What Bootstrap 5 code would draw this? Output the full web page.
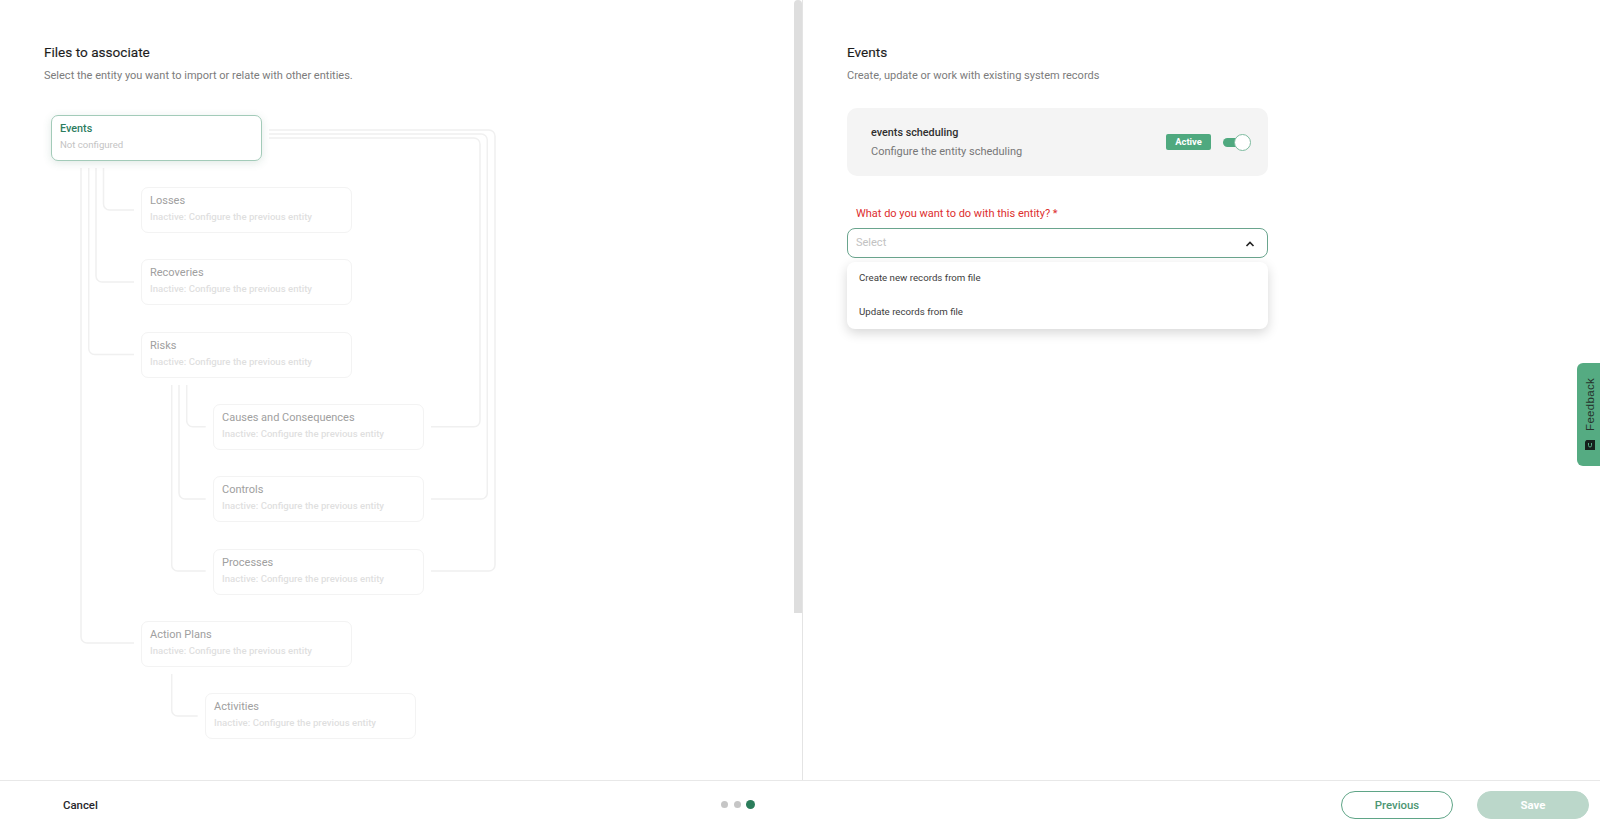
<!DOCTYPE html>
<html lang="en">
<head>
<meta charset="utf-8">
<title>Files to associate</title>
<link href="https://cdn.jsdelivr.net/npm/bootstrap@5.3.0/dist/css/bootstrap.min.css" rel="stylesheet">
<style>
html,body{height:100%;overflow:hidden;background:#fff}
body{font-family:Roboto,"Liberation Sans",sans-serif;color:#212529}
.page-shell{height:823px}
.work-area{height:780px}
.left-pane{width:803px;border-right:1px solid #e4e4e4;position:relative;padding:44px 0 0 44px}
.right-pane{padding:44px 0 0 44px}
.pane-title{font-size:13.6px;font-weight:400;line-height:16px;margin:0 0 8px;color:#1d1d1d;-webkit-text-stroke:.15px #1d1d1d}
.pane-sub{font-size:11px;line-height:16px;margin:0;color:#7c7c7c}
.fake-scroll{position:absolute;top:0;right:0;width:8px;height:613px;background:#dedede;border-radius:4px 4px 0 0}
.tree-canvas{position:absolute;left:0;top:0;width:795px;height:780px}
.tree-lines{position:absolute;left:0;top:0}
.tree-lines path{fill:none;stroke:#f0f0f0;stroke-width:1.5}
.tree-node{position:absolute;width:211px;height:46px;background:#fff;border:1px solid #f3f3f3;border-radius:7px;padding:5px 8px 0}
.node-name{font-size:11px;line-height:16px;color:#a0a0a0}
.node-state{font-size:9.6px;line-height:16px;color:#dfdfdf;font-weight:500}
.node-on{border-color:#a3cbb9;box-shadow:0 2px 8px rgba(60,120,95,.16)}
.node-on .node-name{color:#2e7d5f;font-weight:500;font-size:10.8px}
.node-on .node-state{color:#c4c4c4;font-weight:400}
.n0{left:51px;top:115px}
.n1{left:141px;top:187px}
.n2{left:141px;top:259px}
.n3{left:141px;top:332px}
.n4{left:213px;top:404px}
.n5{left:213px;top:476px}
.n6{left:213px;top:549px}
.n7{left:141px;top:621px}
.n8{left:205px;top:693px}
.sched-box{width:421px;height:68px;margin-top:24px;background:#f4f4f4;border-radius:10px;padding:0 17px 0 24px}
.sched-name{font-size:10.8px;font-weight:500;line-height:16px;color:#2f2f2f}
.sched-desc{font-size:11px;line-height:16px;margin-top:3px;color:#777}
.state-pill{width:45px;height:16px;background:#4fa97f;color:#fff;font-size:9.4px;font-weight:700;border-radius:2px;line-height:16px;text-align:center;margin-right:12px}
.mini-switch{width:28px;height:17px;position:relative}
.mini-track{position:absolute;left:0;top:4px;width:20px;height:9px;background:#4fa97f;border-radius:5px}
.mini-knob{position:absolute;right:0;top:0;width:17px;height:17px;border-radius:50%;background:#fff;border:1px solid #7dbb9f}
.ask-field{width:421px;margin-top:30px;position:relative}
.ask-label{font-size:11px;line-height:16px;color:#dd2e2e;padding-left:9px;margin-bottom:6px}
.ask-input{height:30px;border:1px solid #6aa58e;border-bottom-width:1.5px;border-radius:8px;padding:1px 12px 0 8px;font-size:11px;color:#c2c2c2}
.ask-menu{position:absolute;left:0;top:56px;width:421px;height:67px;background:#fff;border-radius:8px;box-shadow:0 4px 12px rgba(0,0,0,.16);padding-left:12px}
.ask-option{height:33.5px;font-size:9.7px;color:#3d3d3d}
.foot-bar{height:43px;border-top:1px solid #e8e8e8;padding:6px 11px 0 63px;position:relative}
.foot-cancel{font-size:11.4px;font-weight:500;color:#26262b;margin-top:1px}
.step-dots{position:absolute;left:721px;top:19px;height:9px;gap:5.5px}
.step-dot{width:7px;height:7px;border-radius:50%;background:#c6c6c6}
.step-on{width:9px;height:9px;background:#2b7d5b}
.foot-btn{width:112px;height:28px;border-radius:14px;font-size:11.4px;font-weight:500;padding:0;line-height:26px;text-align:center}
.foot-prev{border:1px solid #5fa587;color:#4c9672;background:#fff;margin-right:24px}
.foot-save{border:1px solid #bbd7ca;background:#bbd7ca;color:#fff;font-weight:700}
.feedback-tab{position:absolute;right:0;top:363px;width:23px;height:103px;background:#55ab82;border-radius:6px 0 0 6px;gap:9px;padding:15px 0 0 3px}
.feedback-word{writing-mode:vertical-rl;transform:rotate(180deg);font-family:"Liberation Sans",sans-serif;font-size:11.5px;line-height:12px;color:#26332d;letter-spacing:.3px}
</style>
</head>
<body>
<div class="page-shell d-flex flex-column position-relative">
  <div class="work-area d-flex">
    <section class="left-pane flex-shrink-0">
      <div class="tree-canvas">
        <svg class="tree-lines" width="795" height="780" aria-hidden="true">
          <path d="M103.5 168V204a6 6 0 0 0 6 6H134"/>
          <path d="M96 168V276a6 6 0 0 0 6 6H134"/>
          <path d="M88.7 168V348.5a6 6 0 0 0 6 6H134"/>
          <path d="M81 168V637a6 6 0 0 0 6 6H134"/>
          <path d="M186.7 385V420.7a6 6 0 0 0 6 6H205.7"/>
          <path d="M179 385V493a6 6 0 0 0 6 6H205.7"/>
          <path d="M171.7 385V565a6 6 0 0 0 6 6H205.7"/>
          <path d="M171.7 674V710a6 6 0 0 0 6 6H197.7"/>
          <path d="M269 138H474a6 6 0 0 1 6 6V420.7a6 6 0 0 1 -6 6H431"/>
          <path d="M269 134H481.3a6 6 0 0 1 6 6V493a6 6 0 0 1 -6 6H431"/>
          <path d="M269 130H489a6 6 0 0 1 6 6V565a6 6 0 0 1 -6 6H431"/>
        </svg>
        <div class="tree-node node-on n0"><div class="node-name">Events</div><div class="node-state">Not configured</div></div>
        <div class="tree-node n1"><div class="node-name">Losses</div><div class="node-state">Inactive: Configure the previous entity</div></div>
        <div class="tree-node n2"><div class="node-name">Recoveries</div><div class="node-state">Inactive: Configure the previous entity</div></div>
        <div class="tree-node n3"><div class="node-name">Risks</div><div class="node-state">Inactive: Configure the previous entity</div></div>
        <div class="tree-node n4"><div class="node-name">Causes and Consequences</div><div class="node-state">Inactive: Configure the previous entity</div></div>
        <div class="tree-node n5"><div class="node-name">Controls</div><div class="node-state">Inactive: Configure the previous entity</div></div>
        <div class="tree-node n6"><div class="node-name">Processes</div><div class="node-state">Inactive: Configure the previous entity</div></div>
        <div class="tree-node n7"><div class="node-name">Action Plans</div><div class="node-state">Inactive: Configure the previous entity</div></div>
        <div class="tree-node n8"><div class="node-name">Activities</div><div class="node-state">Inactive: Configure the previous entity</div></div>
      </div>
      <div class="position-relative">
        <h1 class="pane-title">Files to associate</h1>
        <p class="pane-sub">Select the entity you want to import or relate with other entities.</p>
      </div>
      <div class="fake-scroll"></div>
    </section>
    <section class="right-pane flex-grow-1">
      <h2 class="pane-title">Events</h2>
      <p class="pane-sub">Create, update or work with existing system records</p>
      <div class="sched-box d-flex align-items-center">
        <div class="flex-grow-1">
          <div class="sched-name">events scheduling</div>
          <div class="sched-desc">Configure the entity scheduling</div>
        </div>
        <div class="state-pill">Active</div>
        <div class="mini-switch"><span class="mini-track"></span><span class="mini-knob"></span></div>
      </div>
      <div class="ask-field">
        <div class="ask-label">What do you want to do with this entity? *</div>
        <div class="ask-input d-flex align-items-center justify-content-between">
          <span>Select</span>
          <svg width="10" height="6" viewBox="0 0 10 6" aria-hidden="true"><path d="M1.5 5L5 1.5 8.5 5" fill="none" stroke="#222" stroke-width="1.6"/></svg>
        </div>
        <div class="ask-menu">
          <div class="ask-option d-flex align-items-center">Create new records from file</div>
          <div class="ask-option d-flex align-items-center">Update records from file</div>
        </div>
      </div>
    </section>
  </div>
  <footer class="foot-bar d-flex align-items-center justify-content-between">
    <span class="foot-cancel">Cancel</span>
    <div class="step-dots d-flex align-items-center"><span class="step-dot"></span><span class="step-dot"></span><span class="step-dot step-on"></span></div>
    <div class="d-flex">
      <button type="button" class="btn foot-btn foot-prev">Previous</button>
      <button type="button" class="btn foot-btn foot-save">Save</button>
    </div>
  </footer>
  <aside class="feedback-tab d-flex flex-column align-items-center">
    <span class="feedback-word">Feedback</span>
    <svg width="10" height="10" viewBox="0 0 10 10" aria-hidden="true"><path d="M0 1.5L1.5 0H10V10H0Z" fill="#16201c"/><path d="M3.5 3V5.5a1.5 1.5 0 0 0 3 0V3" fill="none" stroke="#55ab82" stroke-width="1"/></svg>
  </aside>
</div>
<script src="https://cdn.jsdelivr.net/npm/bootstrap@5.3.0/dist/js/bootstrap.bundle.min.js"></script>
</body>
</html>
